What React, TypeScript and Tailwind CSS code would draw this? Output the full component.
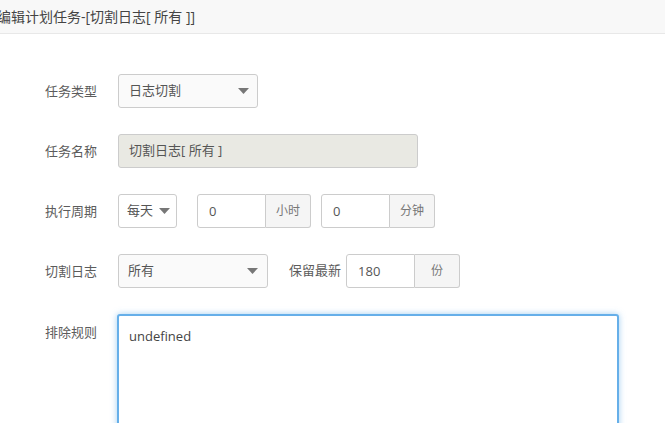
import React from "react";

const font = { fontFamily: '"Open Sans", "Noto Sans CJK SC", sans-serif' };

function Arrow() {
  return (
    <svg width="11" height="6" viewBox="0 0 11 6" className="shrink-0">
      <path d="M0 0 L11 0 L5.5 6 Z" fill="#777" />
    </svg>
  );
}

function Label({ children }: { children: React.ReactNode }) {
  return <div className="w-[54px] shrink-0 text-[13px] text-[#5c5c5c] leading-[34px]">{children}</div>;
}

function Group({ value, unit }: { value: string; unit: string }) {
  return (
    <div className="flex h-[34px]">
      <div className="w-[69px] border border-[#ccc] rounded-l-[3px] bg-white pl-[11px] text-[13px] text-[#555] leading-[32px]">{value}</div>
      <div className="w-[45px] border border-l-0 border-[#ccc] rounded-r-[3px] bg-[#f5f5f5] text-center text-[12px] text-[#777] leading-[32px]">{unit}</div>
    </div>
  );
}

export default function App() {
  return (
    <div className="w-[665px] h-[423px] overflow-hidden bg-white" style={font}>
      <div className="h-[34px] bg-[#f8f8f8] border-b border-[#e8e8e8] flex items-center">
        <div className="ml-[-3px] text-[14px] text-[#444]">编辑计划任务-[切割日志[ 所有 ]]</div>
      </div>
      <div className="pl-[45px] pt-[40px] flex flex-col gap-[26px]">
        <div className="flex items-center">
          <Label>任务类型</Label>
          <div className="ml-[19px] w-[140px] h-[34px] border border-[#ccc] rounded-[3px] bg-[#fafafa] flex items-center justify-between pl-[10px] pr-[8px] text-[13px] text-[#555]">
            <span>日志切割</span>
            <Arrow />
          </div>
        </div>
        <div className="flex items-center">
          <Label>任务名称</Label>
          <div className="ml-[19px] w-[300px] h-[34px] border border-[#ccc] rounded-[3px] bg-[#e9e9e3] flex items-center pl-[10px] text-[13px] text-[#555]">
            切割日志[ 所有 ]
          </div>
        </div>
        <div className="flex items-center">
          <Label>执行周期</Label>
          <div className="ml-[19px] w-[59px] h-[34px] border border-[#ccc] rounded-[3px] bg-white flex items-center gap-[6px] pl-[8px] text-[13px] text-[#555]">
            <span>每天</span>
            <Arrow />
          </div>
          <div className="ml-[20px]">
            <Group value="0" unit="小时" />
          </div>
          <div className="ml-[10px]">
            <Group value="0" unit="分钟" />
          </div>
        </div>
        <div className="flex items-center">
          <Label>切割日志</Label>
          <div className="ml-[19px] w-[150px] h-[34px] border border-[#ccc] rounded-[3px] bg-[#fafafa] flex items-center justify-between pl-[9px] pr-[9px] text-[13px] text-[#555]">
            <span>所有</span>
            <Arrow />
          </div>
          <div className="ml-[21px] text-[13px] text-[#5c5c5c]">保留最新</div>
          <div className="ml-[5px]">
            <Group value="180" unit="份" />
          </div>
        </div>
        <div className="flex items-start">
          <div className="w-[54px] shrink-0 text-[13px] text-[#5c5c5c] pt-[9px]">排除规则</div>
          <div className="ml-[18px] w-[502px] h-[140px] border-2 border-[#66afe9] rounded-[3px] bg-white shadow-[0_0_6px_rgba(102,175,233,0.6)] pl-[10px] pt-[11px] text-[13px] text-[#444]">
            undefined
          </div>
        </div>
      </div>
    </div>
  );
}
